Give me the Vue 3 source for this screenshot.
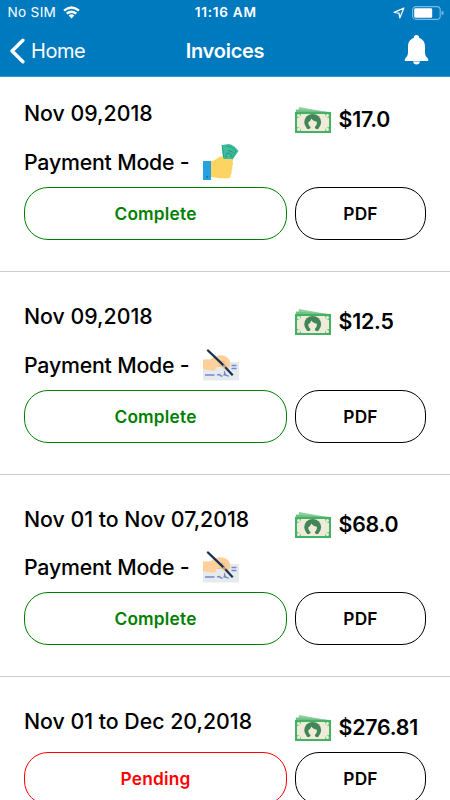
<script setup>
const invoices = [
  { period: 'Nov 09,2018', amount: '$17.0', mode: 'cash', status: 'Complete' },
  { period: 'Nov 09,2018', amount: '$12.5', mode: 'cheque', status: 'Complete' },
  { period: 'Nov 01 to Nov 07,2018', amount: '$68.0', mode: 'cheque', status: 'Complete' },
  { period: 'Nov 01 to Dec 20,2018', amount: '$276.81', mode: null, status: 'Pending' },
]
</script>

<template>
  <div class="screen">
    <header class="header">
      <div class="status-bar">
        <div class="carrier">
          <span>No SIM</span>
          <svg class="wifi" width="17" height="13" viewBox="0 0 17 13">
            <g fill="none" stroke="#fff" stroke-width="2.3">
              <path d="M1 4.7Q8.5-1.7 16 4.7" />
              <path d="M3.7 7.7Q8.5 3.7 13.3 7.7" />
            </g>
            <path d="M5.7 9.5Q8.5 7.2 11.3 9.5L8.5 12.4Z" fill="#fff" />
          </svg>
        </div>
        <span class="time">11:16 AM</span>
        <div class="indicators">
          <svg width="12" height="12" viewBox="0 0 12 12">
            <path d="M10.9 1.1 1.2 5.4 6 6.2 6.8 10.9Z" fill="none" stroke="#fff" stroke-width="1.2" stroke-linejoin="round" />
          </svg>
          <svg width="32" height="14" viewBox="0 0 32 14">
            <rect x=".6" y=".6" width="27.6" height="12.8" rx="3.4" fill="none" stroke="#7dbce1" stroke-width="1.1" />
            <rect x="2.2" y="2.2" width="18" height="9.6" rx="1.3" fill="#fff" />
            <path d="M29.6 4.7Q31.7 5.3 31.7 7T29.6 9.3Z" fill="#7dbce1" />
          </svg>
        </div>
      </div>
      <nav class="nav">
        <div class="back">
          <svg width="16" height="26" viewBox="0 0 16 26">
            <path d="M13.9 2.2 3.1 13 13.9 23.8" fill="none" stroke="#fff" stroke-width="3.4" stroke-linecap="round" stroke-linejoin="round" />
          </svg>
          <span>Home</span>
        </div>
        <h1 class="title">Invoices</h1>
        <svg class="bell" width="25" height="30" viewBox="0 0 25 30">
          <path d="M12.5 0C14.3 0 15.2 1.3 15.2 2.9 19.3 4.3 21 7.6 21 11.5V17.5C21 20.5 22.5 22 24.2 24V26H.8V24C2.5 22 4 20.5 4 17.5V11.5C4 7.6 5.7 4.3 9.8 2.9 9.8 1.3 10.7 0 12.5 0Z" fill="#fff" />
          <path d="M9 26.5H16Q15.4 29.4 12.5 29.4T9 26.5Z" fill="#fff" />
        </svg>
      </nav>
    </header>

    <main class="list">
      <article v-for="(inv, i) in invoices" :key="i" class="invoice">
        <div class="top">
          <span class="period">{{ inv.period }}</span>
          <div class="amount">
            <svg width="36" height="26" viewBox="0 0 36 26">
              <path d="M4 0 35 5.4V9H2.7Z" fill="#8fcf9f" />
              <path d="M.8 2.5 35.5 5V9H.8Z" fill="#6cc383" />
              <rect y="5" width="36" height="21" fill="#46b065" />
              <path d="M5.8 7H30.2A3.8 3.8 0 0 0 34 10.8V20.2A3.8 3.8 0 0 0 30.2 24H5.8A3.8 3.8 0 0 0 2 20.2V10.8A3.8 3.8 0 0 0 5.8 7Z" fill="#eeebd8" />
              <g fill="#e6efdc">
                <circle cx="3.6" cy="8.6" r="1.6" /><circle cx="32.4" cy="8.6" r="1.6" />
                <circle cx="3.6" cy="22.4" r="1.6" /><circle cx="32.4" cy="22.4" r="1.6" />
              </g>
              <circle cx="17.7" cy="15.3" r="8.4" fill="#438558" />
              <path d="M13.3 15.2Q15.6 14.6 16.3 11.6 17.6 14 21.9 14.8C22.1 17.4 21.1 19 19.8 20L20.1 21.2 22.4 22.4V24H13V22.4L15.3 21.2 15.6 20C14.2 19 13.2 17.4 13.3 15.2Z" fill="#eeebd8" />
            </svg>
            <span>{{ inv.amount }}</span>
          </div>
        </div>
        <div v-if="inv.mode" class="mode">
          <span>Payment Mode -</span>
          <svg v-if="inv.mode === 'cash'" width="36" height="36" viewBox="0 0 36 36">
            <path d="M19 1 26 0Q31 .8 35.5 7L30 15 26 20 20 15Z" fill="#3fbd9c" />
            <path d="M19 1 21 15M23 2Q29 1.8 33 7L29 14" fill="none" stroke="#26a283" stroke-width="1" />
            <path d="M23.5 13.5Q21.8 9.5 25.5 9 29 9.5 28 13M25 6.3 30.2 8.4" fill="none" stroke="#278e7c" stroke-width="1" />
            <path d="M8 17.5C12.5 17 14 12.8 18.8 12.2Q20.4 12 20.8 15H28.2Q30.4 15.4 29.7 18 30.8 20 29.2 22 30.3 24.5 28.6 26.5 29.4 29 27.5 31 28.2 34 25.6 34.2H17C13.5 34.2 11.5 33 8 33Z" fill="#fcd462" />
            <rect y="17" width="8" height="19" fill="#25a2df" />
            <circle cx="4.2" cy="32.8" r="1.1" fill="#1878ad" />
          </svg>
          <svg v-else width="36" height="32" viewBox="0 0 36 32">
            <rect y="13" width="36" height="18.4" fill="#e5eaec" />
            <path d="M0 10.5 7.5 10.2Q11 7.4 15.5 6.5C20 5.8 25 7.8 26.6 11.5 28.3 15.5 26.4 20.5 23 22L17 17 12.5 18.6Q14.5 21 9.5 21.7L0 20Z" fill="#ffd09b" />
            <path d="M15 17.6 22.5 15.8M17.5 12 22.2 13" fill="none" stroke="#efb979" stroke-width="1" />
            <path d="M28.5 16.5H33.5M28.5 19.5H33.5M2 26H11.5M14 25.8 16.5 25.5 18 27H19.5M21 22.3Q22.5 23 20.8 26.5 23.3 23.8 22.8 26.4L25.8 27.2" fill="none" stroke="#7886cc" stroke-width="1.3" />
            <path d="M5 1.5 20.8 16.6" stroke="#173251" stroke-width="2.4" stroke-linecap="round" />
            <path d="M20.3 16 22.6 18.6" stroke="#a9a59e" stroke-width="2.2" />
            <path d="M22.3 18.2 29.7 26.3" stroke="#173251" stroke-width="2.2" />
          </svg>
        </div>
        <div class="actions">
          <button class="pill" :class="inv.status.toLowerCase()">{{ inv.status }}</button>
          <button class="pill">PDF</button>
        </div>
      </article>
    </main>
  </div>
</template>

<style>
body {
  margin: 0;
  background: #fff;
}
</style>

<style scoped>
.screen {
  height: 800px;
  overflow: hidden;
  background: #fff;
  color: #000;
  font-family: Inter, "Liberation Sans", sans-serif;
}
.header {
  box-sizing: border-box;
  height: 77px;
  background: #007abf;
  border-bottom: 1px solid #4a94c6;
  color: #fff;
}
.status-bar {
  display: grid;
  grid-template-columns: 1fr auto 1fr;
  align-items: center;
  height: 25px;
  padding: 0 6px 0 7.5px;
  font-size: 13.6px;
  line-height: 25px;
}
.carrier {
  display: flex;
  align-items: center;
  gap: 7px;
  letter-spacing: 0.3px;
}
.time {
  font-size: 13.6px;
  font-weight: 600;
  letter-spacing: 0.75px;
}
.indicators {
  display: flex;
  align-items: center;
  justify-content: flex-end;
  gap: 7px;
}
.nav {
  display: grid;
  grid-template-columns: 1fr auto 1fr;
  align-items: center;
  height: 51px;
  padding: 0 21px 0 9px;
}
.back {
  display: flex;
  align-items: center;
  gap: 6px;
  font-size: 20px;
  letter-spacing: -0.45px;
}
.title {
  margin: 0;
  padding-left: 12px;
  font-size: 20px;
  font-weight: 600;
  letter-spacing: -0.25px;
}
.bell {
  justify-self: end;
  margin-bottom: 2px;
}
.invoice {
  box-sizing: border-box;
  height: 202.67px;
  padding: 26px 24px 0;
  border-bottom: 1px solid #ccc;
}
.invoice:first-child {
  height: 195px;
  padding-top: 18.4px;
}
.top,
.actions {
  display: grid;
  grid-template-columns: 263px 131px;
  gap: 8px;
}
.top {
  height: 48.7px;
  font-size: 21.3px;
  font-weight: 500;
  line-height: 37px;
}
.period {
  white-space: nowrap;
}
.amount {
  display: flex;
  gap: 8px;
  padding-top: 5.2px;
  font-weight: 600;
  letter-spacing: -0.2px;
}
.amount svg {
  margin-top: 6px;
}
.amount span {
  margin-left: -0.5px;
}
.mode {
  display: flex;
  align-items: center;
  gap: 14px;
  height: 36px;
  margin-bottom: 7px;
  font-size: 21.3px;
  font-weight: 500;
  letter-spacing: -0.2px;
}
.pill {
  box-sizing: border-box;
  height: 53px;
  padding: 0;
  border: 1.3px solid currentColor;
  border-radius: 24px;
  background: #fff;
  color: #000;
  font: 600 17.3px Inter, "Liberation Sans", sans-serif;
  letter-spacing: 0.2px;
}
.complete {
  color: #008000;
}
.pending {
  color: #f00;
}
</style>
